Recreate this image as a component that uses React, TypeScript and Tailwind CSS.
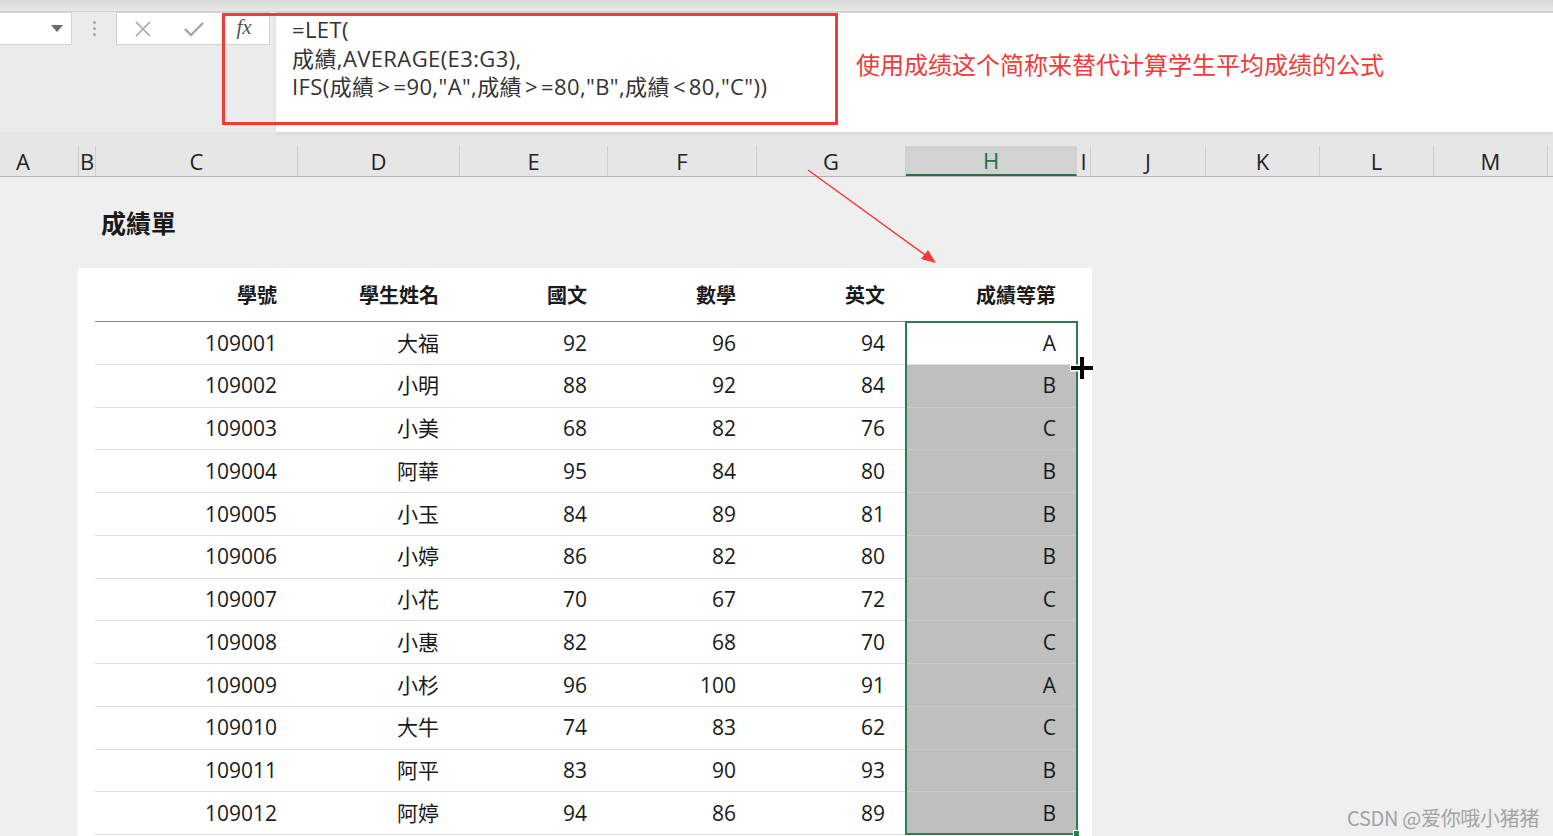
import React from "react";

const cols = [
  { l: "A", w: 79, pl: true },
  { l: "B", w: 17 },
  { l: "C", w: 202 },
  { l: "D", w: 162 },
  { l: "E", w: 148 },
  { l: "F", w: 149 },
  { l: "G", w: 149 },
  { l: "H", w: 171, sel: true },
  { l: "I", w: 14 },
  { l: "J", w: 115 },
  { l: "K", w: 114 },
  { l: "L", w: 114 },
  { l: "M", w: 114 },
  { l: "", w: 10 },
];

const rows = [
  ["109001", "大福", "92", "96", "94", "A"],
  ["109002", "小明", "88", "92", "84", "B"],
  ["109003", "小美", "68", "82", "76", "C"],
  ["109004", "阿華", "95", "84", "80", "B"],
  ["109005", "小玉", "84", "89", "81", "B"],
  ["109006", "小婷", "86", "82", "80", "B"],
  ["109007", "小花", "70", "67", "72", "C"],
  ["109008", "小惠", "82", "68", "70", "C"],
  ["109009", "小杉", "96", "100", "91", "A"],
  ["109010", "大牛", "74", "83", "62", "C"],
  ["109011", "阿平", "83", "90", "93", "B"],
  ["109012", "阿婷", "94", "86", "89", "B"],
];

const heads = ["學號", "學生姓名", "國文", "數學", "英文", "成績等第"];
const widths = ["w-[203px]", "w-[162px]", "w-[148px]", "w-[149px]", "w-[149px]", "w-[171px]"];

const font = { fontFamily: '"Open Sans", "Noto Sans CJK TC", sans-serif' };

export default function App() {
  return (
    <div className="relative w-[1553px] h-[836px] overflow-hidden bg-[#efefef] text-[#1a1a1a]" style={font}>
      {/* top strip */}
      <div className="h-[12px] bg-gradient-to-b from-[#d6d6d6] to-[#e9e9e9] border-b border-[#d0d0d0]" />

      {/* formula bar */}
      <div className="flex h-[120px] bg-[#ebebeb]">
        <div className="w-[276px] flex items-start">
          <div className="w-[72px] h-[33px] bg-white border border-[#d4d4d4] border-l-0 flex items-center justify-end pr-[8px]">
            <svg width="12" height="7" viewBox="0 0 12 7">
              <path d="M0 0 L12 0 L6 7 Z" fill="#6b6b6b" />
            </svg>
          </div>
          <div className="w-[44px] h-[33px] flex flex-col items-center justify-center gap-[3px]">
            <span className="w-[3px] h-[3px] rounded-full bg-[#a8a8a8]" />
            <span className="w-[3px] h-[3px] rounded-full bg-[#a8a8a8]" />
            <span className="w-[3px] h-[3px] rounded-full bg-[#a8a8a8]" />
          </div>
          <div className="w-[154px] h-[33px] bg-white border border-[#d4d4d4] flex items-center">
            <div className="w-[52px] flex justify-center">
              <svg width="16" height="16" viewBox="0 0 16 16">
                <path d="M1 1 L15 15 M15 1 L1 15" stroke="#a6a6a6" strokeWidth="1.6" />
              </svg>
            </div>
            <div className="w-[50px] flex justify-center">
              <svg width="20" height="16" viewBox="0 0 20 16">
                <path d="M1 8 L7 14 L19 2" stroke="#a6a6a6" strokeWidth="2.4" fill="none" />
              </svg>
            </div>
            <div
              className="flex-1 flex justify-center text-[21px] italic text-[#555] leading-none pb-[2px]"
              style={{ fontFamily: '"Liberation Serif", serif' }}
            >
              fx
            </div>
          </div>
        </div>
        <div className="flex-1 bg-white border-t border-[#d4d4d4] shadow-[0_2px_3px_rgba(0,0,0,0.08)] flex items-start">
          <div className="pl-[16px] pt-[2px] text-[22px] leading-[28.5px] tracking-[0.4px] text-[#333] w-[580px]">
            <div>=LET(</div>
            <div>成績,AVERAGE(E3:G3),</div>
            <div>
              IFS(成績<span className="mx-[3px]">&gt;</span>=90,"A",成績<span className="mx-[3px]">&gt;</span>=80,"B",成績<span className="mx-[3px]">&lt;</span>80,"C"))
            </div>
          </div>
          <div
            className="pt-[36px] text-[24px] text-[#f23a3a] leading-[30px]"
            style={{ fontFamily: '"Noto Sans CJK SC", sans-serif' }}
          >
            使用成绩这个简称来替代计算学生平均成绩的公式
          </div>
        </div>
      </div>

      {/* column headers */}
      <div className="h-[45px] bg-[#e6e6e6] flex items-end border-b border-[#b5b5b5]">
        {cols.map((c, i) => (
          <div
            key={i}
            style={{ width: c.w }}
            className={
              "h-[30px] shrink-0 flex items-center text-[22px] leading-none border-r border-[#cfcfcf] " +
              (c.pl ? "justify-start pl-[16px] " : "justify-center ") +
              (c.sel ? "bg-[#d2d2d2] text-[#217346] border-b-2 border-b-[#217346]" : "text-[#222]")
            }
          >
            {c.l}
          </div>
        ))}
      </div>

      {/* sheet */}
      <div
        className="pl-[101px] pt-[28px] h-[63px] text-[25px] font-bold leading-[34px]"
        style={{ fontFamily: '"Noto Sans CJK TC", sans-serif' }}
      >
        成績單
      </div>
      <div className="ml-[78px] w-[1014px] bg-white pl-[17px] mt-[28px] h-[600px]">
        <div className="flex h-[54px] border-b border-[#8c8c8c] w-[982px]">
          {heads.map((h, i) => (
            <div
              key={i}
              className={widths[i] + " flex items-center justify-end pr-[21px] pt-[1px] text-[20px] font-bold"}
              style={{ fontFamily: '"Noto Sans CJK TC", sans-serif' }}
            >
              {h}
            </div>
          ))}
        </div>
        <div className="relative w-[982px]">
          {rows.map((r, ri) => (
            <div key={ri} className="flex h-[42.75px] border-b border-[#e0e0e0]">
              {r.map((v, ci) => (
                <div
                  key={ci}
                  className={
                    widths[ci] +
                    " flex items-center justify-end pr-[21px] pt-[1px] text-[21px] " +
                    (ci === 5 && ri > 0 ? "bg-[#bfbfbf] border-b border-[#cbcbcb] -mb-px" : "")
                  }
                >
                  {v}
                </div>
              ))}
            </div>
          ))}
          {/* selection border */}
          <div className="absolute left-[810px] top-[-1px] w-[173px] h-[514px] border-2 border-[#2f7a4e] pointer-events-none" />
          <div className="absolute left-[978px] top-[508px] w-[7px] h-[7px] bg-[#2f7a4e] border border-white" />
        </div>
      </div>

      {/* red annotation box */}
      <div className="absolute left-[222px] top-[13px] w-[616px] h-[112px] border-[3px] border-[#f23a3a] pointer-events-none" />

      {/* red arrow */}
      <svg className="absolute left-0 top-0 pointer-events-none" width="1553" height="836">
        <line x1="808" y1="170" x2="928" y2="257" stroke="#f23a3a" strokeWidth="1.5" />
        <path d="M936 263 L921 259 L928 250 Z" fill="#f23a3a" />
      </svg>

      {/* fill cursor */}
      <svg className="absolute left-[1068px] top-[354px]" width="28" height="28" viewBox="0 0 28 28">
        <path d="M14 2 V26 M2 14 H26" stroke="#fff" strokeWidth="7" />
        <path d="M14 3 V25 M3 14 H25" stroke="#000" strokeWidth="4" />
      </svg>

      {/* watermark */}
      <div
        className="absolute left-[1347px] top-[803px] text-[20px] text-[#a3a3a3] tracking-[-0.3px]"
        style={{ fontFamily: '"Noto Sans CJK SC", sans-serif' }}
      >
        CSDN @爱你哦小猪猪
      </div>
    </div>
  );
}
